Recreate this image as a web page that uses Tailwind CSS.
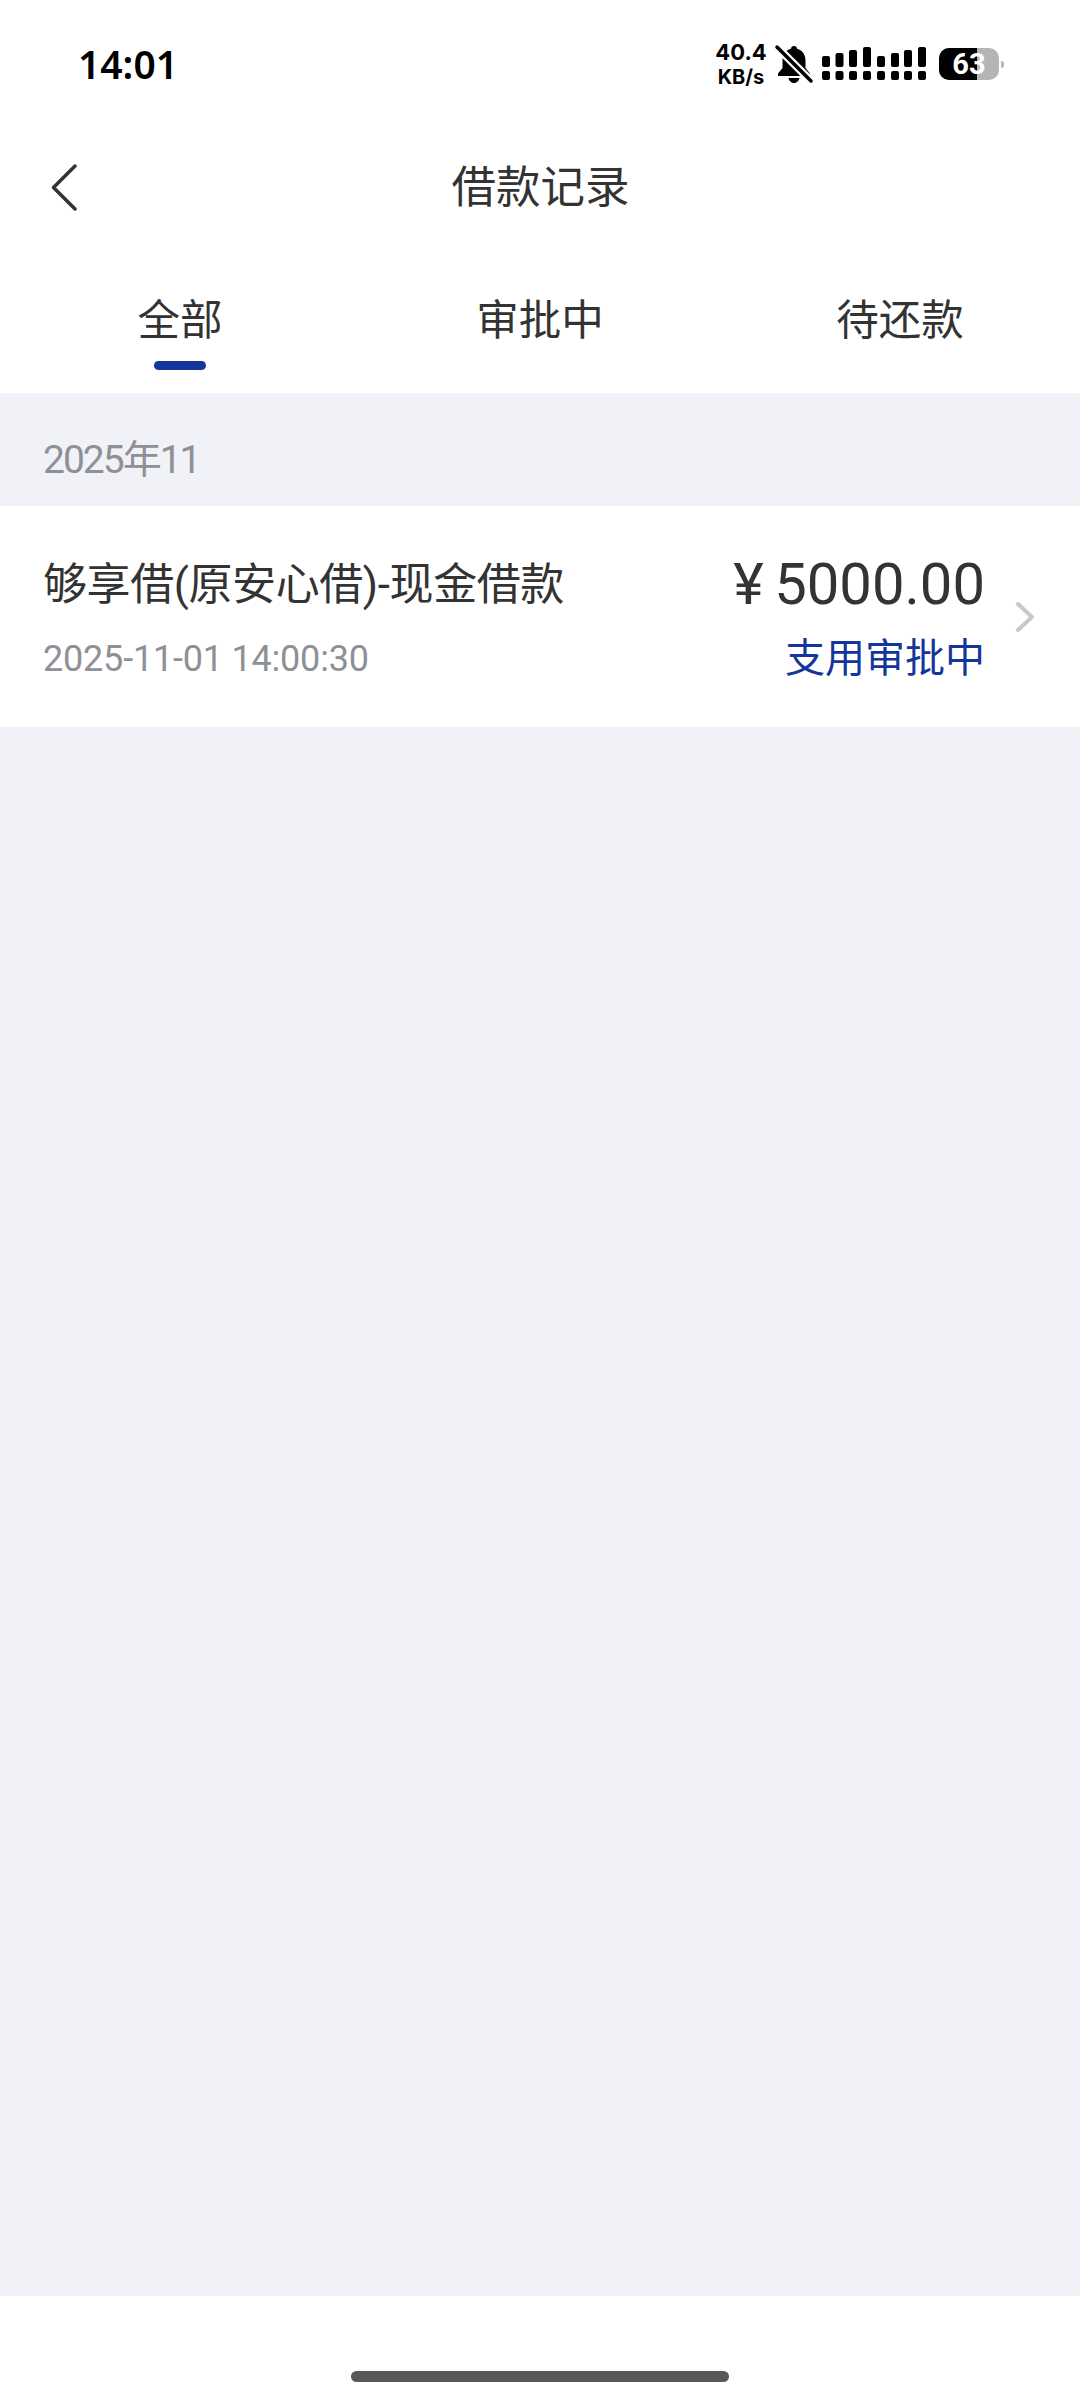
<!DOCTYPE html>
<html lang="zh-CN">
<head>
    <meta charset="UTF-8">
    <meta name="viewport" content="width=device-width, initial-scale=1.0">
    <title>借款记录</title>
    <script src="https://cdn.jsdelivr.net/npm/@tailwindcss/browser@4"></script>
</head>
<body class="bg-white font-['Roboto','Noto_Sans_CJK_SC',sans-serif]">
    <div class="w-[1080px] h-[2400px] flex flex-col">
        <!-- status bar -->
        <div class="h-[128px] flex items-center justify-between pl-[78px] pr-[76px] text-black shrink-0">
            <span class="font-['Noto_Sans',sans-serif] font-semibold text-[39px] leading-none -mt-[2px]">14:01</span>
            <div class="flex items-center">
                <div class="w-[50px] flex flex-col items-center font-['Inter',sans-serif] font-bold leading-none">
                    <span class="text-[22px]">40.4</span>
                    <span class="text-[20px] mt-[4px]">KB/s</span>
                </div>
                <svg class="ml-[8px]" width="40" height="40" viewBox="0 0 40 40">
                    <path d="M20 2c-1.800 0-3 1.200-3 2.800C11 6.500 8.500 11 8.500 17v7L4 29.500V32h32v-2.500L31.500 24v-7c0-6-2.500-10.500-8.500-12.200C23 3.200 21.800 2 20 2zM14.500 34c.5 2.800 2.800 5 5.500 5s5-2.200 5.500-5z" fill="#000"/>
                    <path d="M3 3l35 35" stroke="#fff" stroke-width="8"/>
                    <path d="M3 3l34 34" stroke="#000" stroke-width="3.500" stroke-linecap="round"/>
                </svg>
                <svg class="ml-[8px]" width="105" height="34" viewBox="0 0 105 34" fill="#000">
                    <rect x="0" y="9" width="8" height="11" rx="2"/><rect x="13.500" y="6" width="8" height="14" rx="2"/><rect x="27" y="3" width="8" height="17" rx="2"/><rect x="41" y="0" width="8" height="20" rx="2"/>
                    <rect x="0" y="24" width="8" height="9" rx="2"/><rect x="13.500" y="24" width="8" height="9" rx="2"/><rect x="27" y="24" width="8" height="9" rx="2"/><rect x="41" y="24" width="8" height="9" rx="2"/>
                    <rect x="55" y="9" width="8" height="11" rx="2"/><rect x="69" y="6" width="8" height="14" rx="2"/><rect x="82" y="3" width="8" height="17" rx="2"/><rect x="96" y="0" width="8" height="20" rx="2"/>
                    <rect x="55" y="24" width="8" height="9" rx="2"/><rect x="69" y="24" width="8" height="9" rx="2"/><rect x="82" y="24" width="8" height="9" rx="2"/><rect x="96" y="24" width="8" height="9" rx="2"/>
                </svg>
                <div class="ml-[12px] flex items-center">
                    <div class="relative w-[60px] h-[32px] rounded-[10px] overflow-hidden bg-[#b5b5b5] flex items-center justify-center">
                        <div class="absolute left-0 top-0 bottom-0 w-[38px] bg-black"></div>
                        <span class="relative text-white font-bold text-[29px] leading-none">63</span>
                    </div>
                    <div class="ml-[2px] w-[3px] h-[7px] rounded-r-sm bg-[#b5b5b5]"></div>
                </div>
            </div>
        </div>

        <!-- header -->
        <div class="relative h-[118px] flex items-center justify-center shrink-0">
            <svg class="absolute left-[50px] top-[35px]" width="28" height="48" viewBox="0 0 28 48" fill="none">
                <path d="M25 3L3.500 24.500 25 46" stroke="#333" stroke-width="3.500" stroke-linecap="round" stroke-linejoin="round"/>
            </svg>
            <span class="text-[44.5px] leading-none text-[#333] pt-[2px] pl-[1px]">借款记录</span>
        </div>

        <!-- tabs -->
        <div class="h-[147px] grid grid-cols-3 shrink-0 text-[42.5px] text-[#333]">
            <div class="flex flex-col items-center pt-[54px]">
                <span class="leading-none">全部</span>
                <div class="mt-[18.500px] w-[52px] h-[9px] rounded-full bg-[#14359a]"></div>
            </div>
            <div class="flex flex-col items-center pt-[54px]"><span class="leading-none">审批中</span></div>
            <div class="flex flex-col items-center pt-[54px]"><span class="leading-none">待还款</span></div>
        </div>

        <!-- list -->
        <div class="flex-1 bg-[#f1f2f7] flex flex-col">
            <div class="h-[113px] pl-[43px] pt-[22px] flex items-center text-[39px] tracking-[-2px] text-[#8e9096] leading-none">2025年11</div>
            <div class="h-[221px] bg-white flex items-center pl-[43px] pr-[45px]">
                <div class="flex-1 pt-[6px]">
                    <div class="text-[44px] tracking-[-0.4px] leading-none text-[#333]">够享借(原安心借)-现金借款</div>
                    <div class="mt-[34px] text-[36px] tracking-[-0.2px] leading-none text-[#8e9096]">2025-11-01 14:00:30</div>
                </div>
                <div class="flex flex-col items-end pr-[2px]">
                    <div class="text-[58px] leading-none text-[#333] [word-spacing:-4px]">¥ 5000.00</div>
                    <div class="mt-[26px] text-[40px] leading-none text-[#14359a]">支用审批中</div>
                </div>
                <svg class="ml-[28px]" width="20" height="30" viewBox="0 0 20 30" fill="none">
                    <path d="M3 2l14 13L3 28" stroke="#c8c9ce" stroke-width="4" stroke-linecap="round" stroke-linejoin="round"/>
                </svg>
            </div>
        </div>

        <!-- home bar -->
        <div class="h-[104px] flex justify-center pt-[75px] shrink-0">
            <div class="w-[378px] h-[11px] rounded-full bg-[#585858]"></div>
        </div>
    </div>
</body>
</html>
